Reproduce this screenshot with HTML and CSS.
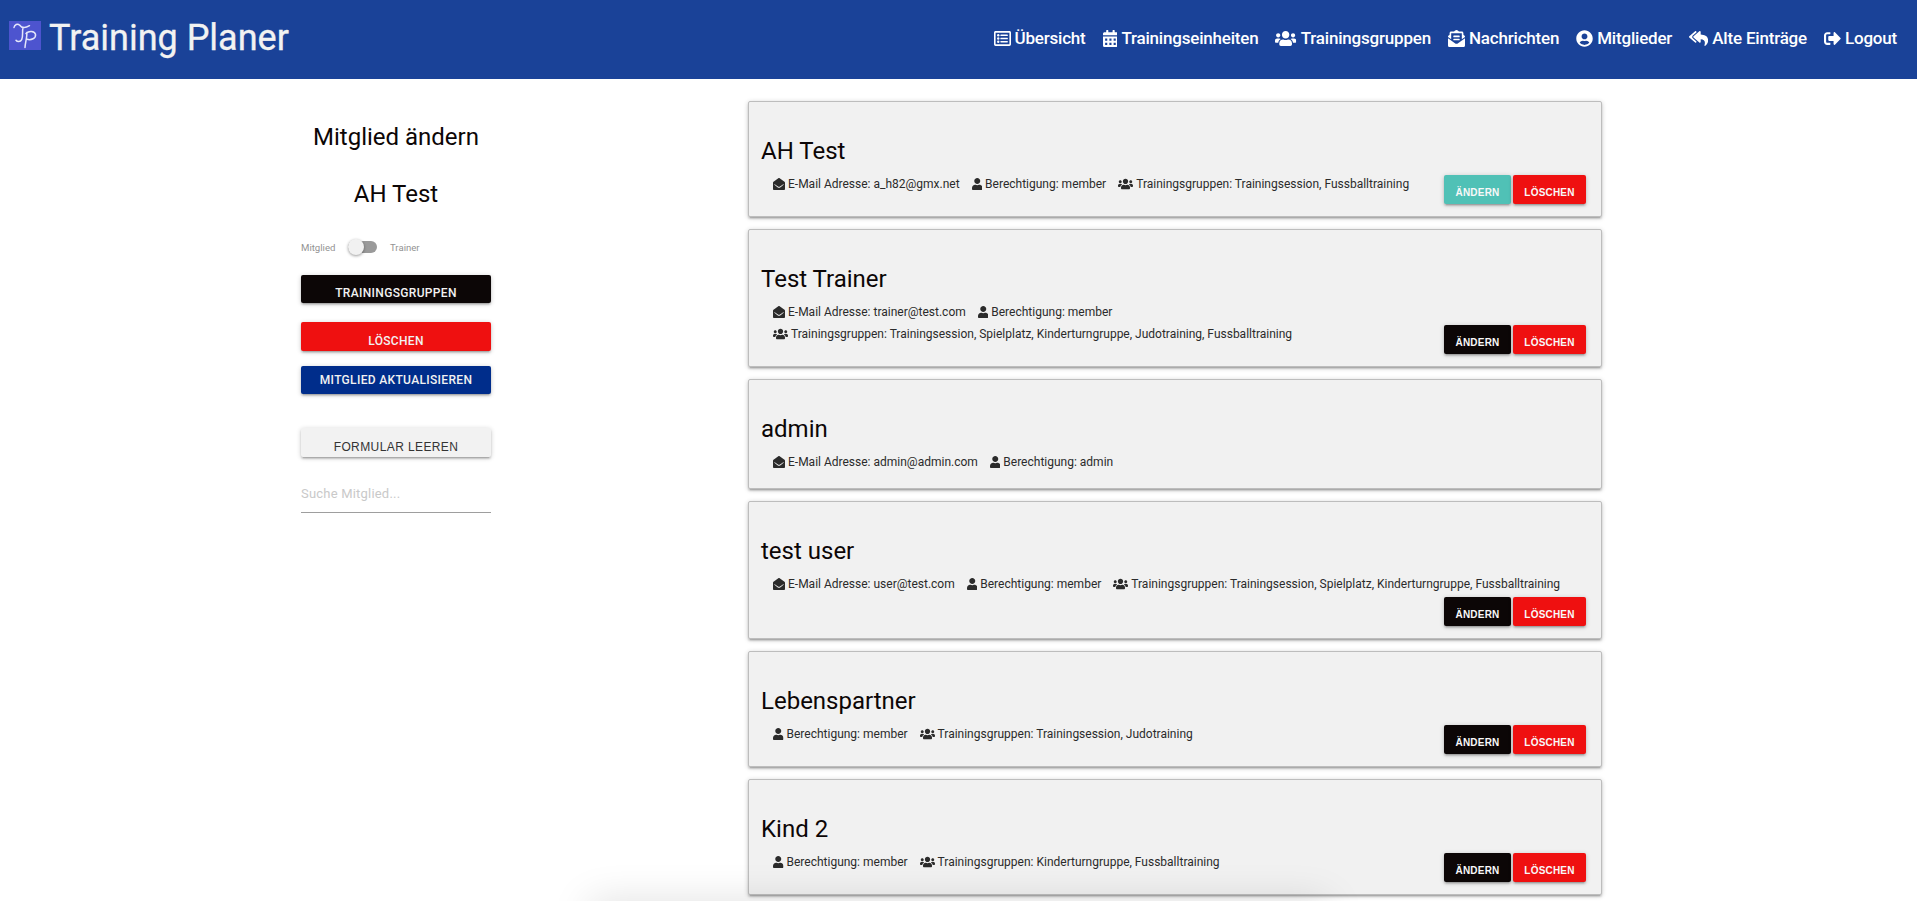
FILE: index.html
```html
<!DOCTYPE html>
<html lang="de">
<head>
<meta charset="utf-8">
<title>Training Planer</title>
<link rel="stylesheet" href="styles.css">
</head>
<body>
<svg class="sprite" aria-hidden="true">
  <symbol id="i-list" viewBox="0 0 512 512"><path fill-rule="evenodd" d="M464 32H48C21.5 32 0 53.500 0 80v352c0 26.500 21.500 48 48 48h416c26.500 0 48-21.500 48-48V80c0-26.500-21.500-48-48-48zm-6 400H54a6 6 0 0 1-6-6V86a6 6 0 0 1 6-6h404a6 6 0 0 1 6 6v340a6 6 0 0 1-6 6z"/><path d="M204 136h200q12 0 12 12v24q0 12-12 12H204q-12 0-12-12v-24q0-12 12-12zM204 232h200q12 0 12 12v24q0 12-12 12H204q-12 0-12-12v-24q0-12 12-12zM204 328h200q12 0 12 12v24q0 12-12 12H204q-12 0-12-12v-24q0-12 12-12z"/><circle cx="128" cy="160" r="36"/><circle cx="128" cy="256" r="36"/><circle cx="128" cy="352" r="36"/></symbol>
  <symbol id="i-cal" viewBox="0 0 448 512"><path fill-rule="evenodd" d="M0 464c0 26.500 21.500 48 48 48h352c26.500 0 48-21.500 48-48V192H0zM64 256h64v64H64zM192 256h64v64h-64zM320 256h64v64h-64zM64 384h64v64H64zM192 384h64v64h-64zM320 384h64v64h-64z"/><path d="M400 64h-48V16c0-8.800-7.200-16-16-16h-32c-8.800 0-16 7.200-16 16v48H160V16c0-8.800-7.200-16-16-16h-32c-8.800 0-16 7.200-16 16v48H48C21.500 64 0 85.500 0 112v48h448v-48c0-26.500-21.500-48-48-48z"/></symbol>
  <symbol id="i-users" viewBox="0 0 640 512"><path d="M96 224c35.300 0 64-28.700 64-64s-28.700-64-64-64-64 28.700-64 64 28.700 64 64 64zm448 0c35.300 0 64-28.700 64-64s-28.700-64-64-64-64 28.700-64 64 28.700 64 64 64zm32 32h-64c-17.600 0-33.500 7.100-45.100 18.600 40.300 22.100 68.900 62 75.100 109.400h66c17.700 0 32-14.300 32-32v-32c0-35.300-28.700-64-64-64zm-256 0c61.900 0 112-50.100 112-112S381.900 32 320 32 208 82.100 208 144s50.100 112 112 112zm76.800 32h-8.300c-20.800 10-43.900 16-68.500 16s-47.600-6-68.500-16h-8.300C179.600 288 128 339.600 128 403.200V432c0 26.500 21.500 48 48 48h288c26.500 0 48-21.500 48-48v-28.800c0-63.600-51.600-115.200-115.200-115.200zm-223.700-13.400C161.500 263.100 145.600 256 128 256H64c-35.300 0-64 28.700-64 64v32c0 17.700 14.300 32 32 32h65.900c6.300-47.400 34.900-87.300 75.200-109.400z"/></symbol>
  <symbol id="i-news" viewBox="0 0 512 512"><path d="M176 216h160c8.840 0 16-7.160 16-16v-16c0-8.840-7.160-16-16-16H176c-8.840 0-16 7.160-16 16v16c0 8.840 7.160 16 16 16zm-16 80c0 8.840 7.160 16 16 16h160c8.840 0 16-7.160 16-16v-16c0-8.840-7.160-16-16-16H176c-8.840 0-16 7.160-16 16v16zm96 121.130c-16.420 0-32.840-5.060-46.860-15.190L0 250.860V464c0 26.510 21.490 48 48 48h416c26.510 0 48-21.490 48-48V250.860L302.860 401.940c-14.020 10.120-30.440 15.190-46.860 15.190zm237.610-254.180c-8.850-6.940-17.240-13.470-29.610-22.810V96c0-26.510-21.490-48-48-48h-77.550c-3.040-2.200-5.870-4.260-9.040-6.560C312.600 29.170 279.200-.35 256 0c-23.200-.35-56.590 29.170-73.410 41.440-3.170 2.300-6 4.360-9.040 6.560H96c-26.510 0-48 21.490-48 48v44.140c-12.370 9.330-20.760 15.870-29.610 22.810A47.995 47.995 0 0 0 0 200.720v10.650l96 69.350V96h320v184.720l96-69.350v-10.650c0-14.740-6.780-28.670-18.390-37.770z"/></symbol>
  <symbol id="i-usercircle" viewBox="0 0 496 512"><path d="M248 8C111 8 0 119 0 256s111 248 248 248 248-111 248-248S385 8 248 8zm0 96c48.600 0 88 39.400 88 88s-39.400 88-88 88-88-39.400-88-88 39.400-88 88-88zm0 344c-58.700 0-111.300-26.600-146.500-68.200 18.800-35.400 55.600-59.800 98.500-59.800 2.400 0 4.800.4 7.100 1.100 13 4.200 26.600 6.900 40.900 6.900 14.300 0 28-2.700 40.900-6.900 2.300-.7 4.700-1.100 7.100-1.100 42.900 0 79.700 24.400 98.500 59.800C359.300 421.400 306.700 448 248 448z"/></symbol>
  <symbol id="i-reply" viewBox="0 0 576 512"><path d="M136.309 189.836L312.313 37.851C327.720 24.546 352 35.348 352 56.015v82.763c129.182 10.231 224 52.212 224 183.548 0 61.441-39.582 122.309-83.333 154.132-13.653 9.931-33.111-2.533-28.077-18.631 38.512-123.162-3.922-169.482-112.590-182.015v84.175c0 20.701-24.300 31.453-39.687 18.164L136.309 226.164c-11.071-9.561-11.086-26.753 0-36.328zm-128 36.328L184.313 378.150C199.700 391.439 224 380.687 224 359.986v-15.818l-108.606-93.785A55.960 55.960 0 0 1 96 207.998a55.953 55.953 0 0 1 19.393-42.380L224 71.832V56.015c0-20.667-24.280-31.469-39.687-18.164L8.309 189.836c-11.086 9.575-11.071 26.767 0 36.328z"/></symbol>
  <symbol id="i-out" viewBox="0 0 512 512"><path d="M497 273L329 441c-15 15-41 4.500-41-17v-96H152c-13.300 0-24-10.700-24-24v-96c0-13.300 10.700-24 24-24h136V88c0-21.400 25.900-32 41-17l168 168c9.300 9.400 9.300 24.600 0 34zM192 436v-40c0-6.600-5.400-12-12-12H96c-17.700 0-32-14.300-32-32V160c0-17.700 14.300-32 32-32h84c6.600 0 12-5.400 12-12V76c0-6.600-5.400-12-12-12H96c-53 0-96 43-96 96v192c0 53 43 96 96 96h84c6.600 0 12-5.400 12-12z"/></symbol>
  <symbol id="i-user" viewBox="0 0 448 512"><path d="M224 256c70.700 0 128-57.300 128-128S294.700 0 224 0 96 57.300 96 128s57.300 128 128 128zm89.600 32h-16.700c-22.200 10.200-46.900 16-72.900 16s-50.600-5.800-72.900-16h-16.700C60.200 288 0 348.200 0 422.400V464c0 26.500 21.500 48 48 48h352c26.500 0 48-21.500 48-48v-41.600c0-74.200-60.200-134.400-134.400-134.400z"/></symbol>
  <symbol id="i-mail" viewBox="0 0 512 512"><path d="M512 464c0 26.510-21.490 48-48 48H48c-26.510 0-48-21.490-48-48V200.724a48 48 0 0 1 18.387-37.776c24.913-19.529 45.501-35.365 164.200-121.511C199.412 29.170 232.797-.347 256 .003c23.198-.354 56.596 29.172 73.413 41.433 118.687 86.137 139.303 101.995 164.200 121.512A48 48 0 0 1 512 200.724V464zm-65.666-196.605c-2.563-3.728-7.700-4.595-11.339-1.907-22.845 16.873-55.462 40.705-105.582 77.079-16.825 12.266-50.210 41.781-73.413 41.430-23.211.344-56.559-29.143-73.413-41.430-50.114-36.370-82.734-60.204-105.582-77.079-3.639-2.688-8.776-1.821-11.339 1.907l-9.072 13.196a7.998 7.998 0 0 0 1.839 10.967c22.887 16.899 55.454 40.690 105.303 76.868 20.274 14.781 56.524 47.813 92.264 47.573 35.724.242 71.961-32.771 92.263-47.573 49.850-36.179 82.418-59.970 105.303-76.868a7.998 7.998 0 0 0 1.839-10.967l-9.071-13.196z"/></symbol>
</svg>

<header class="topbar">
  <a class="brand">
    <svg class="logo" viewBox="0 0 32 29"><rect width="32" height="29" fill="#4d54cf"/><g fill="none" stroke="#e4e6fa" stroke-width="1.500" stroke-linecap="round" stroke-linejoin="round"><path d="M5 6.500C5.500 3.500 8.500 2.200 10.500 4c2 2.800 5.500 3.500 10 .7M14 6.500c-1 4 .3 9-1.300 12.200-1.300 2.600-4.500 2.300-5.700.6"/><path d="M17.800 11.500c.5 4-1.500 10-1.800 15M17 12.500c3-3 8.500-2.500 9.500.8.700 4-4.500 6.200-8.300 5"/></g></svg>
    <span class="brand-name">Training Planer</span>
  </a>
  <nav class="nav">
    <a class="nav-item"><svg class="ic ic-16"><use href="#i-list"/></svg><span>Übersicht</span></a>
    <a class="nav-item"><svg class="ic ic-14"><use href="#i-cal"/></svg><span>Trainingseinheiten</span></a>
    <a class="nav-item"><svg class="ic ic-20"><use href="#i-users"/></svg><span>Trainingsgruppen</span></a>
    <a class="nav-item"><svg class="ic ic-16"><use href="#i-news"/></svg><span>Nachrichten</span></a>
    <a class="nav-item"><svg class="ic ic-16"><use href="#i-usercircle"/></svg><span>Mitglieder</span></a>
    <a class="nav-item"><svg class="ic ic-18"><use href="#i-reply"/></svg><span>Alte Einträge</span></a>
    <a class="nav-item"><svg class="ic ic-16"><use href="#i-out"/></svg><span>Logout</span></a>
  </nav>
</header>

<main class="page">
  <aside class="side">
    <h2 class="side-title">Mitglied ändern</h2>
    <h2 class="side-title side-name">AH Test</h2>
    <div class="switch"><span class="switch-left">Mitglied</span><span class="lever"><span class="thumb"></span></span><span>Trainer</span></div>
    <button class="btn btn-groups">Trainingsgruppen</button>
    <button class="btn btn-delete">Löschen</button>
    <button class="btn btn-update">Mitglied aktualisieren</button>
    <button class="btn btn-clear">Formular leeren</button>
    <input class="search" type="text" placeholder="Suche Mitglied...">
  </aside>

  <section class="cards">
    <article class="card">
      <h3 class="name">AH Test</h3>
      <div class="info">
        <span class="fact"><svg class="ic ic-16"><use href="#i-mail"/></svg>E-Mail Adresse: a_h82@gmx.net</span>
        <span class="fact"><svg class="ic ic-14"><use href="#i-user"/></svg>Berechtigung: member</span>
        <span class="fact"><svg class="ic ic-20"><use href="#i-users"/></svg>Trainingsgruppen: Trainingsession, Fussballtraining</span>
      </div>
      <div class="actions"><button class="act act-edit active">Ändern</button><button class="act act-del">Löschen</button></div>
    </article>
    <article class="card tall">
      <h3 class="name">Test Trainer</h3>
      <div class="info">
        <span class="fact"><svg class="ic ic-16"><use href="#i-mail"/></svg>E-Mail Adresse: trainer@test.com</span>
        <span class="fact"><svg class="ic ic-14"><use href="#i-user"/></svg>Berechtigung: member</span>
        <span class="fact"><svg class="ic ic-20"><use href="#i-users"/></svg>Trainingsgruppen: Trainingsession, Spielplatz, Kinderturngruppe, Judotraining, Fussballtraining</span>
      </div>
      <div class="actions"><button class="act act-edit">Ändern</button><button class="act act-del">Löschen</button></div>
    </article>
    <article class="card short">
      <h3 class="name">admin</h3>
      <div class="info">
        <span class="fact"><svg class="ic ic-16"><use href="#i-mail"/></svg>E-Mail Adresse: admin@admin.com</span>
        <span class="fact"><svg class="ic ic-14"><use href="#i-user"/></svg>Berechtigung: admin</span>
      </div>
    </article>
    <article class="card tall">
      <h3 class="name">test user</h3>
      <div class="info">
        <span class="fact"><svg class="ic ic-16"><use href="#i-mail"/></svg>E-Mail Adresse: user@test.com</span>
        <span class="fact"><svg class="ic ic-14"><use href="#i-user"/></svg>Berechtigung: member</span>
        <span class="fact"><svg class="ic ic-20"><use href="#i-users"/></svg>Trainingsgruppen: Trainingsession, Spielplatz, Kinderturngruppe, Fussballtraining</span>
      </div>
      <div class="actions"><button class="act act-edit">Ändern</button><button class="act act-del">Löschen</button></div>
    </article>
    <article class="card">
      <h3 class="name">Lebenspartner</h3>
      <div class="info">
        <span class="fact"><svg class="ic ic-14"><use href="#i-user"/></svg>Berechtigung: member</span>
        <span class="fact"><svg class="ic ic-20"><use href="#i-users"/></svg>Trainingsgruppen: Trainingsession, Judotraining</span>
      </div>
      <div class="actions"><button class="act act-edit">Ändern</button><button class="act act-del">Löschen</button></div>
    </article>
    <article class="card">
      <h3 class="name">Kind 2</h3>
      <div class="info">
        <span class="fact"><svg class="ic ic-14"><use href="#i-user"/></svg>Berechtigung: member</span>
        <span class="fact"><svg class="ic ic-20"><use href="#i-users"/></svg>Trainingsgruppen: Kinderturngruppe, Fussballtraining</span>
      </div>
      <div class="actions"><button class="act act-edit">Ändern</button><button class="act act-del">Löschen</button></div>
    </article>
  </section>
</main>
<div class="dock-shadow"></div>
</body>
</html>
```

FILE: styles.css
```css
* { box-sizing: border-box; }
html, body { height: 100%; }
body { margin: 0; overflow: hidden; background: #fff; color: #212121; font-family: Roboto, sans-serif; }
h2, h3 { margin: 0; font-weight: 400; color: #0c0606; }
button { border: 0; padding: 0; margin: 0; }
.sprite { display: none; }

.ic { display: inline-block; flex: none; height: 1em; fill: currentColor; }
.ic-14 { width: .875em; }
.ic-16 { width: 1em; }
.ic-18 { width: 1.125em; }
.ic-20 { width: 1.25em; }

.topbar { display: flex; justify-content: space-between; height: 79px; padding: 0 20px 0 9px; background: #1a4298; color: #f2f2f2; }
.brand { display: flex; align-items: flex-start; gap: 8px; }
.logo { width: 32px; height: 29px; margin-top: 21px; }
.brand-name { font-size: 36px; line-height: 42px; margin-top: 17px; -webkit-text-stroke: .3px #f2f2f2; }
.nav { display: flex; gap: 17px; height: 76px; align-items: center; color: #fff; }
.nav-item { display: flex; align-items: center; gap: 4px; font-size: 17px; font-weight: 500; line-height: 24px; letter-spacing: -.2px; }

.page { display: flex; padding: 22px 0 0 301px; }
.side { display: flex; flex-direction: column; width: 190px; margin-right: 257px; }
.side-title { margin-top: 20px; height: 32px; font-size: 24px; line-height: 32px; text-align: center; white-space: nowrap; }
.side-name { margin-top: 25px; }
.switch { display: flex; align-items: center; height: 16px; margin-top: 29px; font-size: 9.600px; color: #939393; }
.switch-left { width: 47px; }
.lever { display: flex; align-items: center; width: 29px; height: 12px; margin-right: 13px; border-radius: 6px; background: #9a9a9a; }
.thumb { flex: none; width: 16px; height: 16px; border-radius: 50%; background: #f1f1f1; box-shadow: 0 1px 3px rgba(0,0,0,.4); }

.btn { flex: none; height: 28px; border-radius: 2px; color: #f2f2f2; font: 500 12px/36px Roboto, sans-serif; letter-spacing: .33px; text-transform: uppercase; text-align: center; overflow: hidden; white-space: nowrap; box-shadow: 0 2px 2px 0 rgba(0,0,0,.14), 0 3px 1px -2px rgba(0,0,0,.12), 0 1px 5px 0 rgba(0,0,0,.2); }
.btn-groups { margin-top: 20px; background: #0c0606; }
.btn-delete { margin-top: 19px; height: 29px; background: #ef1010; line-height: 38px; }
.btn-update { margin-top: 15px; background: #002d8b; line-height: 25px; }
.btn-clear { margin-top: 34px; height: 29px; background: #f2f2f2; color: #343434; font: 400 12px/38px "Liberation Sans", Arial, sans-serif; letter-spacing: .4px; }
.search { height: 36px; margin-top: 20px; padding: 0 0 2px; border: 0; border-bottom: 1px solid #9e9e9e; outline: 0; background: none; font: 400 13px Roboto, sans-serif; letter-spacing: .2px; }
.search::placeholder { color: #c9c9c9; opacity: 1; }

.cards { display: flex; flex-direction: column; gap: 12px; width: 854px; }
.card { display: grid; grid-template-columns: 1fr auto; align-content: start; position: relative; height: 116px; padding: 33px 15px 0 12px; border: 1px solid #bdbdbd; border-radius: 2px; background: #f1f1f1; box-shadow: 0 2px 2px 0 rgba(0,0,0,.14), 0 3px 1px -2px rgba(0,0,0,.12), 0 1px 5px 0 rgba(0,0,0,.2); }
.tall { height: 138px; }
.short { height: 110px; }
.name { grid-column: 1 / 3; height: 32px; font-size: 24px; line-height: 32px; }
.info { grid-column: 1 / 3; grid-row: 2; display: flex; flex-wrap: wrap; column-gap: 12px; height: 44px; align-content: flex-start; margin: 6px 0 0 12px; font-size: 12px; line-height: 22px; color: #2b2b2b; }
.fact { display: flex; align-items: center; gap: 3px; white-space: nowrap; }
.fact .ic { margin-bottom: 1px; }
.actions { position: absolute; right: 15px; bottom: 12px; display: flex; gap: 2px; }
.act { height: 29px; border-radius: 2px; color: #f8f8f8; font: 700 10px/35px "Liberation Sans", Arial, sans-serif; letter-spacing: .2px; text-transform: uppercase; overflow: hidden; box-shadow: 0 2px 2px 0 rgba(0,0,0,.14), 0 3px 1px -2px rgba(0,0,0,.12), 0 1px 5px 0 rgba(0,0,0,.2); }
.act-edit { width: 67px; background: #0c0606; }
.act-del { width: 73px; background: #ef1010; }
.active { background: #50c1b6; }

/* soft shade rising from the lower window edge */
.dock-shadow { position: fixed; left: 600px; bottom: -22px; width: 717px; height: 10px; box-shadow: 0 0 40px 10px rgba(0,0,0,.15); pointer-events: none; }
```
